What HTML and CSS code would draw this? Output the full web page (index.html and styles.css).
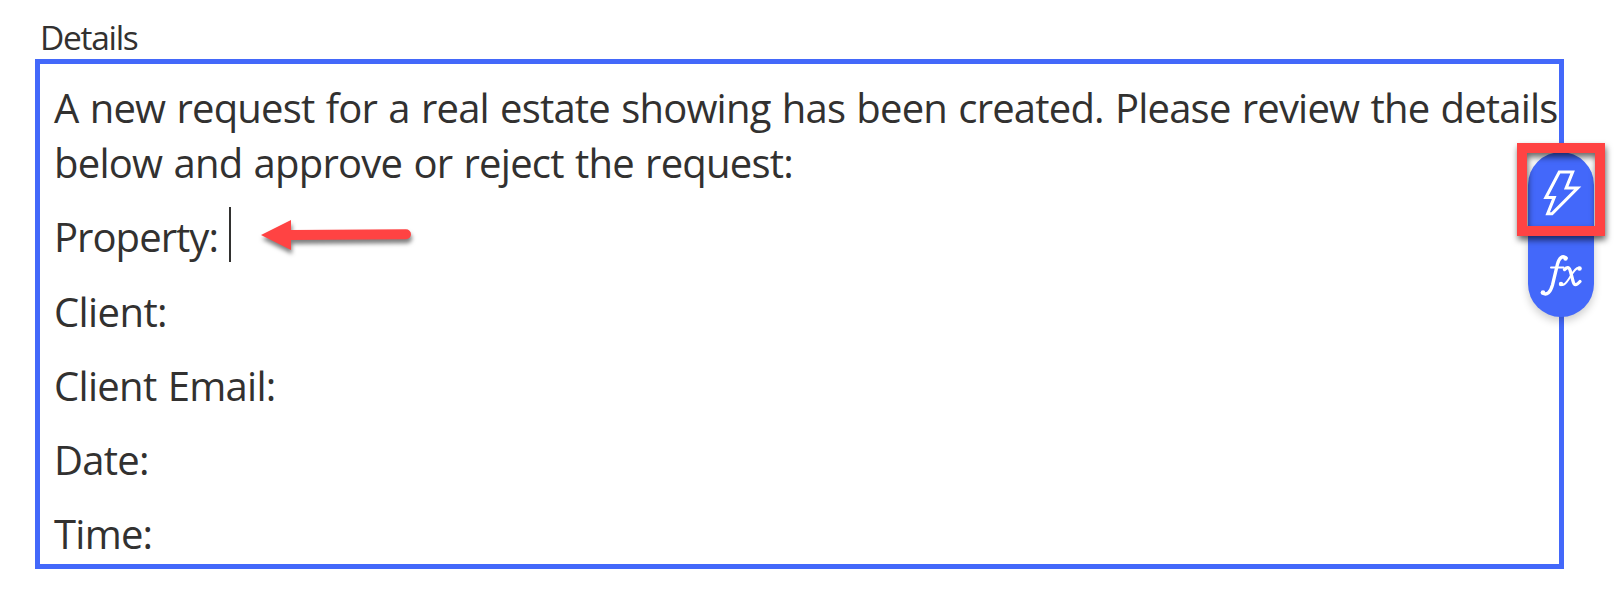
FILE: index.html
```html
<!DOCTYPE html>
<html lang="en">
<head>
<meta charset="utf-8">
<title>Details</title>
<link rel="stylesheet" href="styles.css">
</head>
<body>
<main class="field">
  <label class="field-label">Details</label>
  <section class="editor">
    <p class="intro"><span class="intro-first">A new request for a real estate showing has been created. Please review the details</span><br><span class="intro-second">below and approve or reject the request:</span></p>
    <p class="property"><span class="property-text">Property:</span><span class="caret"></span>
      <svg class="arrow" width="160" height="44" viewBox="0 0 160 44"><path d="M2 17 32 2v10L147 11.300a5 5 0 0 1 0 10L32 22v10Z" fill="#ff4343"/></svg>
    </p>
    <p class="client">Client:</p>
    <p class="email">Client Email:</p>
    <p class="date">Date:</p>
    <p class="time">Time:</p>
    <aside class="tools">
      <button class="tool" aria-label="Dynamic content"><svg width="66" height="83" viewBox="0 0 66 83"><path d="M31.300 20H44.600L38.200 36H49.600L24 61.800H19.700L26.200 45.500H17.900Z" fill="none" stroke="#fff" stroke-width="3.100"/></svg></button>
      <button class="tool" aria-label="Expression"><svg width="66" height="82" viewBox="0 2 66 82" fill="none" stroke="#fff" stroke-linecap="round">
        <path d="M38 25C34.500 22 31 25 29.500 31L24.500 52C22.500 59 19 63 14.500 60" stroke-width="3.300"/>
        <circle cx="37.500" cy="25.500" r="2.200" fill="#fff" stroke="none"/><circle cx="15" cy="59.500" r="2.300" fill="#fff" stroke="none"/>
        <path d="M23 34.500H35.500" stroke-width="2"/>
        <path d="M36.500 36.500C40 33 41.500 34.500 42.500 38.500L45 48C46 53 48.500 52.500 52 48.500" stroke-width="3.300"/>
        <path d="M52 35C47 33.500 44 42 40.500 46.500C37.500 51 35.500 53 32.500 51.500" stroke-width="2"/>
        <circle cx="51.500" cy="35.500" r="2.300" fill="#fff" stroke="none"/><circle cx="33" cy="51" r="2.200" fill="#fff" stroke="none"/>
      </svg></button>
    </aside>
    <div class="highlight"></div>
  </section>
</main>
</body>
</html>
```
FILE: styles.css
```css
* { box-sizing: border-box; }
body { margin: 0; background: #fff; color: #323130; font-family: "Open Sans", "Noto Sans", sans-serif; }
.field { padding: 15px 55px 20px 35px; }
.field-label { display: block; height: 44px; padding-left: 5px; font-size: 33.500px; line-height: 45px; letter-spacing: -1.300px; }
.editor { position: relative; height: 510px; padding: 16px 0 0 14px; border: 5px solid #4368fa; background: #fff; }
p { margin: 0 0 19.300px; font-size: 40px; line-height: 55px; white-space: nowrap; letter-spacing: -.75px; }
.intro-first { letter-spacing: -.8px; word-spacing: 1.600px; }
.intro-second { letter-spacing: -.77px; word-spacing: 1.600px; }
.property { display: flex; height: 55px; }
.property-text { width: 163px; letter-spacing: -.95px; }
.caret { width: 2px; height: 55px; margin-left: 12px; margin-top: -2px; background: #323130; }
.client { letter-spacing: -.6px; }
.email { letter-spacing: -.7px; word-spacing: 1.500px; }
.arrow { margin: 9px 0 0 28px; filter: drop-shadow(1px 4px 2px rgba(0, 0, 0, .5)); }
.tools { position: absolute; left: 1488px; top: 88px; width: 66px; height: 165px; overflow: hidden; border-radius: 33px; background: #4368fa; box-shadow: 0 4px 9px rgba(0, 0, 0, .2); }
.tool { display: block; padding: 0; border: 0; background: none; }
.tool svg { display: block; }
.highlight { position: absolute; left: 1477px; top: 79px; width: 88px; height: 93px; border: 10px solid #ff4343; filter: drop-shadow(1px 4px 3px rgba(0, 0, 0, .6)); }
```
